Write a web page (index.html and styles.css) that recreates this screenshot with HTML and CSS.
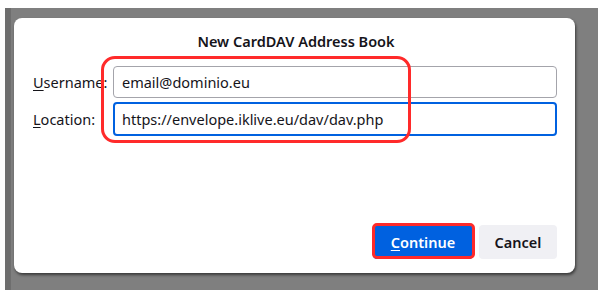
FILE: index.html
```html
<!DOCTYPE html>
<html lang="en">
<head>
<meta charset="utf-8">
<title>New CardDAV Address Book</title>
<link rel="stylesheet" href="styles.css">
</head>
<body>
<div class="backdrop">
  <div class="dialog">
    <h1 class="title">New CardDAV Address Book</h1>
    <div class="form">
      <label class="label" for="user"><u>U</u>sername:</label>
      <div class="field">email@dominio.eu</div>
      <label class="label" for="loc"><u>L</u>ocation:</label>
      <div class="field focused">https://envelope.iklive.eu/dav/dav.php</div>
    </div>
    <div class="buttons">
      <button class="btn primary"><u>C</u>ontinue</button>
      <button class="btn">Cancel</button>
    </div>
    <div class="mark mark-fields"></div>
    <div class="mark mark-continue"></div>
  </div>
</div>
</body>
</html>
```
FILE: styles.css
```css
html, body {
  background: #ffffff;
}
body {
  margin: 8px 7px 8px 5px;
  font-family: "Noto Sans", "Open Sans", sans-serif;
  color: #15141a;
}
.backdrop {
  height: 282px;
  background: #7f7f7f;
  box-shadow: inset 6px 0 0 #6e6e6e;
  padding: 10px 23px 17px 9px;
  box-sizing: border-box;
  display: flex;
}
.dialog {
  position: relative;
  flex: 1;
  background: #ffffff;
  border-radius: 8px;
  box-shadow: 1px 2px 3px rgba(0, 0, 0, 0.55);
  padding: 13px 18px 14px 19px;
  display: flex;
  flex-direction: column;
}
.title {
  margin: 0;
  font-size: 14.5px;
  font-weight: 600;
  text-align: center;
  line-height: 20px;
  color: #15141a;
  padding-left: 2px;
}
.form {
  margin-top: 15px;
  display: grid;
  grid-template-columns: 80px 1fr;
  row-gap: 4px;
  align-items: center;
}
.label {
  font-size: 14.5px;
  white-space: nowrap;
}
.label u {
  text-decoration-thickness: 1px;
  text-underline-offset: 2px;
}
.field {
  height: 32px;
  box-sizing: border-box;
  border: 1px solid #a4a4ab;
  border-radius: 4px;
  padding: 0 8px;
  font-size: 14.5px;
  display: flex;
  align-items: center;
}
.field.focused {
  height: 34px;
  border: 2px solid #0061e0;
  padding: 0 7px;
}
.buttons {
  margin-top: auto;
  display: flex;
  justify-content: flex-end;
  gap: 6px;
}
.btn {
  height: 34px;
  border: none;
  border-radius: 4px;
  font-family: inherit;
  font-size: 14.5px;
  font-weight: 600;
  background: #f0f0f4;
  color: #15141a;
  padding: 0 14px;
  min-width: 78px;
}
.btn.primary {
  background: #0061e0;
  color: #ffffff;
  width: 100px;
}
.btn u {
  text-underline-offset: 2px;
}
.mark {
  position: absolute;
  border: 3px solid #ff2a2a;
  box-sizing: border-box;
  pointer-events: none;
}
.mark-fields {
  left: 87px;
  top: 38px;
  width: 310px;
  height: 87px;
  border-radius: 14px;
}
.mark-continue {
  left: 358px;
  top: 205px;
  width: 103px;
  height: 36px;
  border-radius: 5px;
}
```
